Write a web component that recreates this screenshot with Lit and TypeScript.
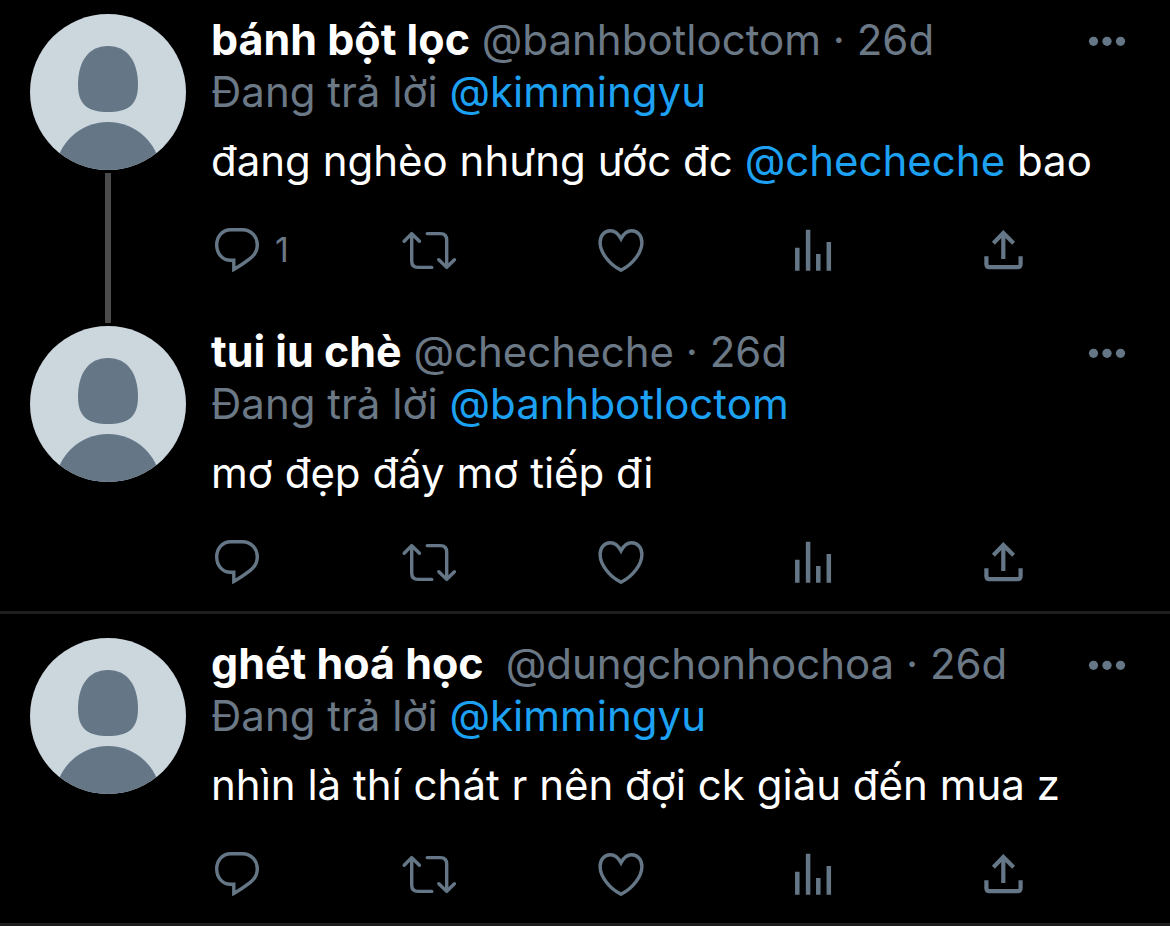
import { LitElement, html, css, svg, nothing } from "lit";
import { customElement, property } from "lit/decorators.js";

interface Tweet {
  name: string;
  handle: string;
  age: string;
  replyTo: string;
  body: string;
  replies?: number;
  thread?: boolean;
}

const tweets: Tweet[] = [
  {
    name: "bánh bột lọc",
    handle: "@banhbotloctom",
    age: "26d",
    replyTo: "@kimmingyu",
    body: "đang nghèo nhưng ước đc @checheche bao",
    replies: 1,
    thread: true,
  },
  {
    name: "tui iu chè",
    handle: "@checheche",
    age: "26d",
    replyTo: "@banhbotloctom",
    body: "mơ đẹp đấy mơ tiếp đi",
  },
  {
    name: "ghét hoá học ",
    handle: "@dungchonhochoa",
    age: "26d",
    replyTo: "@kimmingyu",
    body: "nhìn là thí chát r nên đợi ck giàu đến mua z",
  },
];

const icons = {
  reply: svg`<path d="M19.5 5.7H31.5C40 5.7 46.3 12.6 46.3 21C46.3 27 43.3 31.5 38.3 35.2Q31.5 40.5 22.8 45.4V36.2H19.5C11.5 36.2 5.7 29.5 5.7 21C5.7 12.5 11.5 5.7 19.5 5.7Z"/>`,
  retweet: svg`<path stroke-linecap="round" stroke-linejoin="round" d="M1.2 17.3L8.7 9.6L16.4 17.3M8.7 10V37Q8.7 43.4 15 43.4H28.8M24.2 9.6H37.4Q43.7 9.6 43.7 16V43M35.8 35.7L43.7 43.4L51.4 35.7"/>`,
  like: svg`<path d="M27 14.8C24.3 9.6 20.6 6.8 16.3 6.8C10.2 6.8 6.1 12 6.1 18.5C6.1 28.5 15.5 40.6 27 46.2C38.5 40.6 47.9 28.5 47.9 18.5C47.9 12 43.8 6.8 37.7 6.8C33.4 6.8 29.7 9.6 27 14.8Z"/>`,
  stats: svg`<path stroke-width="4.5" d="M11.3 23.7V46.7M22.1 5.7V46.7M32.3 30V46.7M42.8 18V46.7"/>`,
  share: svg`<path stroke-width="4.2" d="M26.3 9V35M16.4 19.2L26.3 9L36.6 19.2M9.4 32.3V40.2Q9.4 43.2 12.4 43.2H40.6Q43.6 43.2 43.6 40.2V32.3"/>`,
};

@customElement("tweet-item")
class TweetItem extends LitElement {
  @property({ attribute: false }) tweet!: Tweet;

  static styles = css`
    :host {
      display: block;
    }
    .tweet {
      display: flex;
      gap: 25px;
      padding: 0 44px 0 30px;
    }
    .side {
      flex: none;
      display: flex;
      flex-direction: column;
      align-items: center;
    }
    .avatar {
      display: block;
      width: 156px;
      height: 156px;
      border-radius: 50%;
      background: #ccd6dd;
    }
    .line {
      flex: 1;
      width: 6px;
      margin: 3px 0;
      background: #4b4b4b;
    }
    .main {
      flex: 1;
      min-width: 0;
      padding-bottom: 23px;
    }
    .threaded .main {
      padding-bottom: 50px;
    }
    .head {
      display: flex;
      justify-content: space-between;
    }
    .who,
    .context,
    .body {
      margin: 0;
    }
    .who {
      white-space: pre;
    }
    .name {
      color: #fff;
      font-size: 43px;
      font-weight: 700;
      line-height: 1;
    }
    .body {
      margin-top: 17px;
      color: #fff;
    }
    a {
      color: #1da1f2;
      text-decoration: none;
    }
    .who a {
      color: inherit;
    }
    button {
      display: flex;
      align-items: center;
      gap: 12px;
      padding: 0;
      border: 0;
      background: none;
      color: inherit;
      font: inherit;
      cursor: pointer;
    }
    .more {
      flex: none;
      height: 52px;
    }
    .dots {
      display: block;
      fill: #657786;
    }
    .actions {
      display: grid;
      grid-template-columns: repeat(4, 1fr) 52px;
      margin-top: 37px;
      padding-right: 97px;
    }
    .icon {
      display: block;
      flex: none;
      overflow: visible;
      fill: none;
      stroke: #657786;
      stroke-width: 3.4;
    }
    .count {
      font-size: 34px;
      line-height: 52px;
    }
  `;

  private action(label: string, shape: unknown, count?: number) {
    return html`<button type="button" aria-label=${label}>
      <svg class="icon" width="52" height="52" viewBox="0 0 52 52" aria-hidden="true">${shape}</svg>
      ${count ? html`<span class="count">${count}</span>` : nothing}
    </button>`;
  }

  private rich(text: string) {
    return text
      .split(/(@\w+)/)
      .map((part) => (part.startsWith("@") ? html`<a href="#">${part}</a>` : part));
  }

  render() {
    const t = this.tweet;
    return html`<article class="tweet ${t.thread ? "threaded" : ""}">
      <div class="side">
        <svg class="avatar" viewBox="0 0 156 156" aria-hidden="true">
          <path fill="#657786" d="M78 32C98 32 108 48 108 71C108 91 98 98 78 98C58 98 48 91 48 71C48 48 58 32 78 32Z" />
          <circle fill="#657786" cx="78" cy="161" r="53" />
        </svg>
        ${t.thread ? html`<div class="line"></div>` : nothing}
      </div>
      <div class="main">
        <header class="head">
          <p class="who"><a href="#"><span class="name">${t.name}</span> ${t.handle}</a> · ${t.age}</p>
          <button class="more" type="button" aria-label="More">
            <svg class="dots" width="38" height="52" viewBox="0 0 38 52" aria-hidden="true">
              <circle cx="5.5" cy="27.3" r="4.6" />
              <circle cx="19" cy="27.3" r="4.6" />
              <circle cx="32.5" cy="27.3" r="4.6" />
            </svg>
          </button>
        </header>
        <p class="context">Đang trả lời <a href="#">${t.replyTo}</a></p>
        <p class="body">${this.rich(t.body)}</p>
        <div class="actions">
          ${this.action("Reply", icons.reply, t.replies)}
          ${this.action("Retweet", icons.retweet)}
          ${this.action("Like", icons.like)}
          ${this.action("Analytics", icons.stats)}
          ${this.action("Share", icons.share)}
        </div>
      </div>
    </article>`;
  }
}

@customElement("app-root")
class AppRoot extends LitElement {
  static styles = css`
    :host {
      display: block;
      min-height: 100vh;
      box-sizing: border-box;
      background: #000;
      color: #6b7886;
      font: 400 42px/52px Inter, "Noto Sans", sans-serif;
    }
    .conversation {
      padding-top: 14px;
      border-bottom: 3px solid #1e1e1e;
    }
    .conversation + .conversation {
      padding-top: 24px;
    }
  `;

  render() {
    const [first, second, third] = tweets;
    return html`<main>
      <section class="conversation">
        <tweet-item .tweet=${first}></tweet-item>
        <tweet-item .tweet=${second}></tweet-item>
      </section>
      <section class="conversation">
        <tweet-item .tweet=${third}></tweet-item>
      </section>
    </main>`;
  }
}
